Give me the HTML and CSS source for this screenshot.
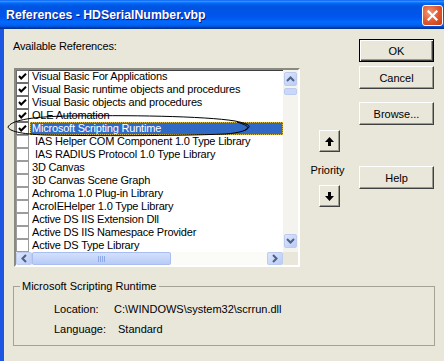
FILE: index.html
```
<!DOCTYPE html>
<html>
<head>
<meta charset="utf-8">
<link rel="stylesheet" href="styles.css">
</head>
<body>
<div class="window">
  <div class="titlebar">
    <span class="title">References - HDSerialNumber.vbp</span>
    <div class="close"><svg width="11" height="11" viewBox="0 0 11 11"><path d="M1.5 1.5 L9.5 9.5 M9.5 1.5 L1.5 9.5" stroke="#fff" stroke-width="2.2" stroke-linecap="square"/></svg></div>
  </div>
  <div class="body">
    <div class="top">
      <div class="left">
        <div class="label">Available References:</div>
        <div class="listbox">
          <div class="listmain">
            <div class="items">
              <div class="row"><span class="cb on"><svg width="11" height="11" viewBox="0 0 11 11"><polyline points="2,5 4.2,7.5 9,2.8" fill="none" stroke="#000" stroke-width="2"/></svg></span><span class="txt">Visual Basic For Applications</span></div>
              <div class="row"><span class="cb on"><svg width="11" height="11" viewBox="0 0 11 11"><polyline points="2,5 4.2,7.5 9,2.8" fill="none" stroke="#000" stroke-width="2"/></svg></span><span class="txt">Visual Basic runtime objects and procedures</span></div>
              <div class="row"><span class="cb on"><svg width="11" height="11" viewBox="0 0 11 11"><polyline points="2,5 4.2,7.5 9,2.8" fill="none" stroke="#000" stroke-width="2"/></svg></span><span class="txt">Visual Basic objects and procedures</span></div>
              <div class="row"><span class="cb on"><svg width="11" height="11" viewBox="0 0 11 11"><polyline points="2,5 4.2,7.5 9,2.8" fill="none" stroke="#000" stroke-width="2"/></svg></span><span class="txt">OLE Automation</span></div>
              <div class="row"><span class="cb on"><svg width="11" height="11" viewBox="0 0 11 11"><polyline points="2,5 4.2,7.5 9,2.8" fill="none" stroke="#000" stroke-width="2"/></svg></span><span class="txt sel">Microsoft Scripting Runtime</span></div>
              <div class="row"><span class="cb"></span><span class="txt ind">IAS Helper COM Component 1.0 Type Library</span></div>
              <div class="row"><span class="cb"></span><span class="txt ind">IAS RADIUS Protocol 1.0 Type Library</span></div>
              <div class="row"><span class="cb"></span><span class="txt">3D Canvas</span></div>
              <div class="row"><span class="cb"></span><span class="txt">3D Canvas Scene Graph</span></div>
              <div class="row"><span class="cb"></span><span class="txt">Achroma 1.0 Plug-in Library</span></div>
              <div class="row"><span class="cb"></span><span class="txt">AcroIEHelper 1.0 Type Library</span></div>
              <div class="row"><span class="cb"></span><span class="txt">Active DS IIS Extension Dll</span></div>
              <div class="row"><span class="cb"></span><span class="txt">Active DS IIS Namespace Provider</span></div>
              <div class="row"><span class="cb"></span><span class="txt">Active DS Type Library</span></div>
            </div>
            <div class="vscroll">
              <div class="sbtn up"><svg width="9" height="6" viewBox="0 0 9 6"><polyline points="1,5 4.5,1.5 8,5" fill="none" stroke="#4d6185" stroke-width="2"/></svg></div>
              <div class="vthumb"></div>
              <div class="vspace"></div>
              <div class="sbtn down"><svg width="9" height="6" viewBox="0 0 9 6"><polyline points="1,1 4.5,4.5 8,1" fill="none" stroke="#4d6185" stroke-width="2"/></svg></div>
            </div>
          </div>
          <div class="hscroll">
            <div class="hbtn"><svg width="6" height="9" viewBox="0 0 6 9"><polyline points="5,1 1.5,4.5 5,8" fill="none" stroke="#4d6185" stroke-width="2"/></svg></div>
            <div class="hthumb"><span class="grip"></span></div>
            <div class="htrack"></div>
            <div class="hbtn"><svg width="6" height="9" viewBox="0 0 6 9"><polyline points="1,1 4.5,4.5 1,8" fill="none" stroke="#4d6185" stroke-width="2"/></svg></div>
            <div class="corner"></div>
          </div>
        </div>
      </div>
      <div class="priority">
        <div class="btn arrow"><svg width="9" height="9" viewBox="0 0 9 9"><path d="M4.5 0 L9 5 L6 5 L6 9 L3 9 L3 5 L0 5 Z" fill="#000"/></svg></div>
        <div class="plabel">Priority</div>
        <div class="btn arrow down"><svg width="9" height="9" viewBox="0 0 9 9"><path d="M4.5 9 L9 4 L6 4 L6 0 L3 0 L3 4 L0 4 Z" fill="#000"/></svg></div>
      </div>
      <div class="buttons">
        <div class="btn def">OK</div>
        <div class="btn b2">Cancel</div>
        <div class="btn b3">Browse...</div>
        <div class="btn b4">Help</div>
      </div>
    </div>
    <fieldset class="group">
      <legend>Microsoft Scripting Runtime</legend>
      <div class="info">
        <span class="k">Location:</span><span class="v">C:\WINDOWS\system32\scrrun.dll</span>
        <span class="k">Language:</span><span class="v lang">Standard</span>
      </div>
    </fieldset>
    <svg class="annot" width="250" height="26" viewBox="0 0 250 26"><path d="M3 14 C6 8 22 4 60 3 C120 2 200 3 230 8 C240 10 245 12 244 14 C243 17 235 20 220 21 C170 23 90 23 40 22 C15 21 4 18 3 14 Z M232 9 C241 12 246 14 240 17" fill="none" stroke="#000" stroke-width="1"/></svg>
  </div>
</div>
</body>
</html>
```
FILE: styles.css
```
* { box-sizing: border-box; }
html, body { margin: 0; padding: 0; }
body {
  width: 444px;
  height: 361px;
  overflow: hidden;
  font-family: "Liberation Sans", Arial, sans-serif;
  font-size: 11px;
  color: #000;
  background: #e9e6da;
}
.window {
  width: 444px;
  height: 361px;
  display: flex;
  flex-direction: column;
}
.titlebar {
  height: 29px;
  flex: none;
  display: flex;
  align-items: center;
  padding-left: 6px;
  background: linear-gradient(to bottom, #0058ee 0%, #3a93ff 4%, #288eff 6%, #127dff 8%, #036ffc 10%, #0262ee 14%, #0057e5 20%, #0054e3 24%, #0055eb 56%, #005bf5 66%, #026afe 76%, #0062ef 86%, #0052d6 92%, #0040ab 94%, #003092 100%);
}
.title {
  flex: 1;
  color: #fff;
  font-weight: bold;
  font-size: 12.3px;
  text-shadow: 1px 1px 0 #0a1883;
  padding-top: 1px;
}
.close {
  width: 21px;
  height: 21px;
  margin-right: 1px;
  margin-top: 1px;
  border: 1px solid #fff;
  border-radius: 3px;
  background: radial-gradient(circle at 35% 35%, #f09a78 0%, #e35a32 50%, #c23b12 100%);
  display: flex;
  align-items: center;
  justify-content: center;
}
.body {
  flex: 1;
  position: relative;
  border-left: 4px solid #1d56e0;
  padding: 10px 0 0 9px;
}
.top {
  display: flex;
}
.left {
  width: 287px;
}
.label {
  margin-top: 1px;
  height: 13px;
  line-height: 13px;
  letter-spacing: -0.15px;
}
.listbox {
  margin-top: 15px;
  margin-left: 1px;
  width: 286px;
  height: 199px;
  border-style: solid;
  border-width: 2px;
  border-color: #8b8a80 #fff #fff #8b8a80;
  box-shadow: inset 1px 1px 0 #404040;
  background: #fff;
  display: flex;
  flex-direction: column;
}
.listmain {
  display: flex;
  height: 182px;
}
.items {
  width: 267px;
  overflow: hidden;
}
.row {
  height: 13px;
  display: flex;
  align-items: center;
  white-space: nowrap;
  letter-spacing: -0.2px;
}
.cb {
  flex: none;
  width: 13px;
  height: 13px;
  border: 1px solid #9c9c9c;
  background: #fff;
  display: flex;
  align-items: center;
  justify-content: center;
}
.cb.on {
  border-color: #6e6e6e;
}
.txt {
  margin-left: 2px;
  padding-left: 1px;
  line-height: 13px;
  height: 13px;
}
.txt.ind {
  padding-left: 4px;
}
.txt.sel {
  flex: 1;
  background: #316ac5;
  color: #fff;
  outline: 1px dotted #d8b848;
  outline-offset: -1px;
  padding-left: 2px;
  margin-left: 1px;
}
.vscroll {
  width: 15px;
  background: #f4f3ee;
  display: flex;
  flex-direction: column;
  align-items: center;
}
.sbtn {
  width: 13px;
  height: 14px;
  margin-top: 2px;
  border: 1px solid #bccbee;
  border-radius: 2px;
  background: linear-gradient(135deg, #dce6fd, #bacbf5);
  display: flex;
  align-items: center;
  justify-content: center;
}
.sbtn.down {
  margin-top: 0;
  margin-bottom: 4px;
}
.vthumb {
  width: 13px;
  height: 7px;
  margin-top: 2px;
  border: 1px solid #bccbee;
  border-radius: 2px;
  background: #c9d7fb;
}
.vspace { flex: 1; }
.hscroll {
  display: flex;
  height: 13px;
  background: #f4f3ee;
}
.hbtn {
  width: 16px;
  height: 13px;
  border: 1px solid #bccbee;
  border-radius: 2px;
  background: linear-gradient(135deg, #dce6fd, #bacbf5);
  display: flex;
  align-items: center;
  justify-content: center;
}
.hthumb {
  width: 139px;
  height: 13px;
  border: 1px solid #a9bdf0;
  border-radius: 2px;
  background: linear-gradient(to bottom, #d3e0fd, #b8cbf6);
  display: flex;
  align-items: center;
  justify-content: center;
}
.grip {
  width: 8px;
  height: 6px;
  background: repeating-linear-gradient(to right, #8ea7e6 0 1px, transparent 1px 2px);
}
.htrack {
  width: 96px;
  background: #fbfbf8;
}
.corner {
  width: 15px;
  background: #e9e6da;
}
.priority {
  width: 59px;
  display: flex;
  flex-direction: column;
  align-items: center;
  padding-top: 91px;
}
.btn {
  background: #e9e6da;
  border-style: solid;
  border-width: 1px;
  border-color: #fff #404040 #404040 #fff;
  box-shadow: inset -1px -1px 0 #9a9a90;
  display: flex;
  align-items: center;
  justify-content: center;
}
.arrow {
  width: 21px;
  height: 22px;
  margin-left: -1px;
}
.arrow.down {
  margin-top: 8px;
}
.plabel {
  margin-top: 12px;
  height: 13px;
  line-height: 13px;
  margin-left: -4px;
}
.buttons {
  width: 75px;
  display: flex;
  flex-direction: column;
}
.buttons .btn {
  height: 23px;
  width: 75px;
}
.btn.def {
  border: 1px solid #000;
  box-shadow: inset 1px 1px 0 #fff, inset -1px -1px 0 #404040, inset -2px -2px 0 #9a9a90;
}
.btn.b2 { margin-top: 4px; }
.btn.b3 { margin-top: 13px; }
.btn.b4 { margin-top: 41px; }
.group {
  margin: 13px 0 0 0;
  width: 422px;
  border: 1px solid #a3a295;
  padding: 10px 0 9px 0;
}
.group legend {
  margin-left: 6px;
  padding: 0 2px;
  line-height: 13px;
  height: 13px;
}
.info {
  display: grid;
  grid-template-columns: 60px auto;
  row-gap: 7px;
  line-height: 13px;
  padding-left: 40px;
}
.lang { padding-left: 4px; }
.annot {
  position: absolute;
  left: 1px;
  top: 84px;
}
```
